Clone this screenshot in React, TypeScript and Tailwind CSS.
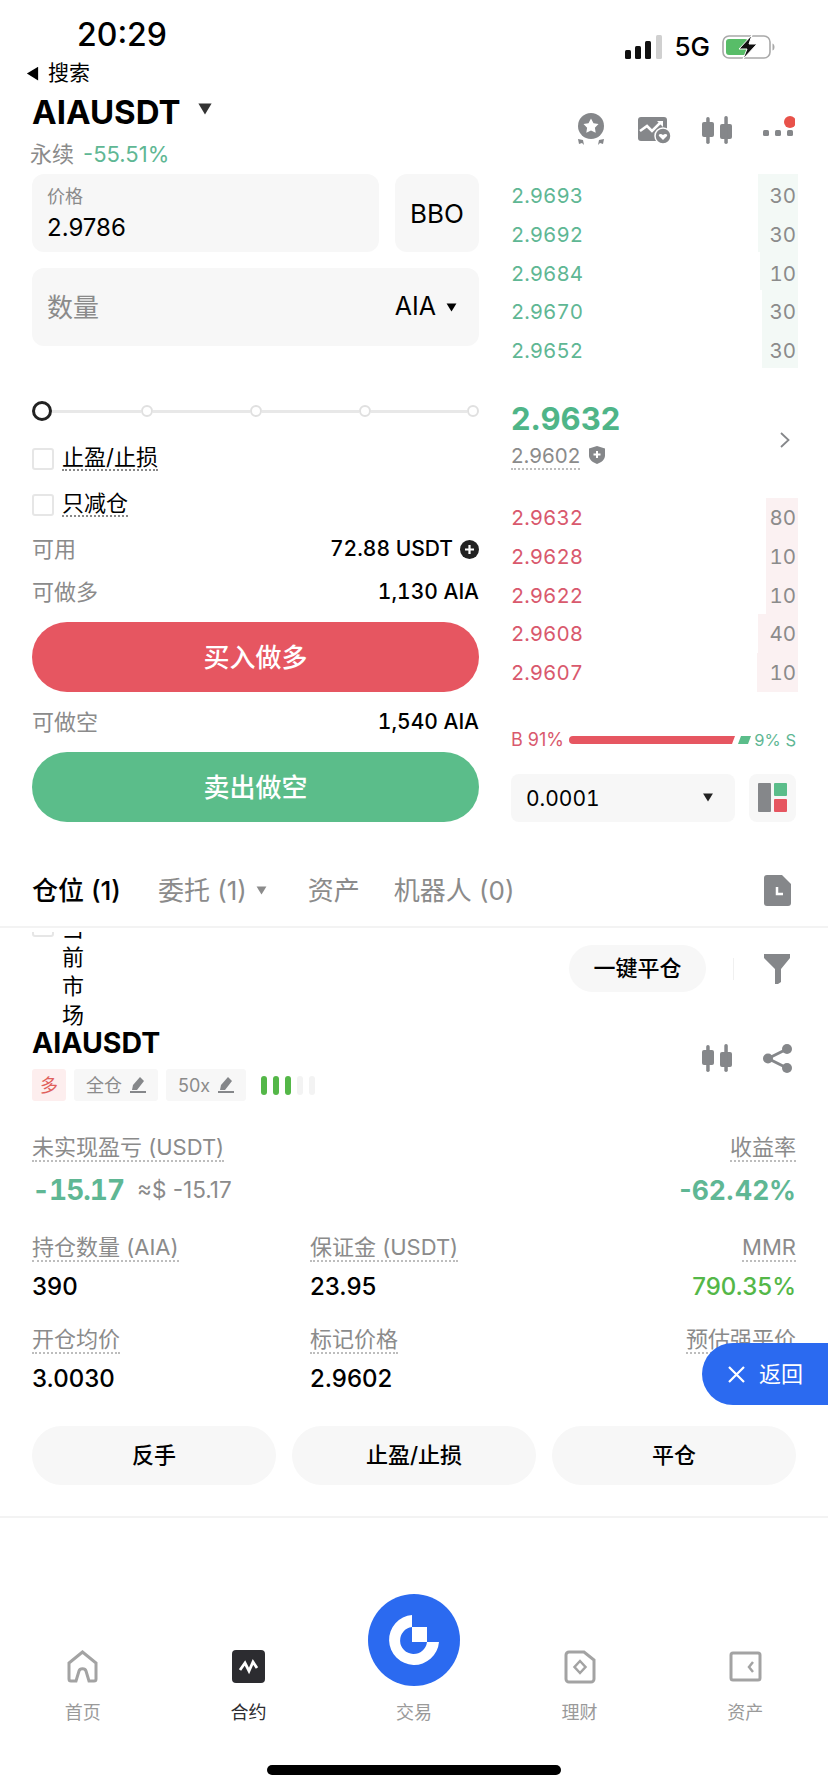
import React from 'react';

const asks = [
  { price: '2.9693', qty: '30', width: 'w-[40px]' },
  { price: '2.9692', qty: '30', width: 'w-[40px]' },
  { price: '2.9684', qty: '10', width: 'w-[38px]' },
  { price: '2.9670', qty: '30', width: 'w-[36px]' },
  { price: '2.9652', qty: '30', width: 'w-[36px]' },
];

const bids = [
  { price: '2.9632', qty: '80', width: 'w-[32px]' },
  { price: '2.9628', qty: '10', width: 'w-[32px]' },
  { price: '2.9622', qty: '10', width: 'w-[32px]' },
  { price: '2.9608', qty: '40', width: 'w-[40px]' },
  { price: '2.9607', qty: '10', width: 'w-[41px]' },
];

const Triangle = ({ className }: { className: string }) => (
  <svg className={className} viewBox="0 0 12 10" fill="currentColor">
    <path d="M0.5 0.5h11L6 9.5z" />
  </svg>
);

const Candles = ({ className }: { className: string }) => (
  <svg className={className} viewBox="0 0 30 29" fill="#85878a">
    <rect x="0" y="6" width="12" height="15" rx="2" />
    <rect x="4.200" y="1" width="3.500" height="27" rx="1.700" />
    <rect x="18" y="8" width="12" height="15" rx="2" />
    <rect x="22.300" y="0" width="3.500" height="28" rx="1.700" />
  </svg>
);

const DottedLabel = ({ children }: { children: React.ReactNode }) => (
  <span className="inline-block h-[28px] leading-[26px] text-[22px] text-[#8b8b8b] border-b-2 border-dotted border-[#bdbdbd] whitespace-nowrap">
    {children}
  </span>
);

const Stat = ({ label, value, right, green }: { label: string; value: string; right?: boolean; green?: boolean }) => (
  <div className={right ? 'flex flex-col items-end' : 'flex flex-col items-start'}>
    <DottedLabel>{label}</DottedLabel>
    <div className={green ? 'mt-[7px] h-[36px] leading-[36px] text-[24px] font-medium text-[#54b748]' : 'mt-[7px] h-[36px] leading-[36px] text-[24px] font-medium text-black'}>
      {value}
    </div>
  </div>
);

const InfoRow = ({ label, children }: { label: string; children: React.ReactNode }) => (
  <div className="h-[28px] flex items-center justify-between">
    <span className="text-[22px] text-[#8b8b8b]">{label}</span>
    <span className="flex items-center gap-[7px] text-[21px] font-medium tabular-nums text-black">{children}</span>
  </div>
);

const NavLabel = ({ children, active }: { children: string; active?: boolean }) => (
  <div className={active ? 'mt-[16px] h-[26px] leading-[26px] text-[18px] text-[#2c2c30]' : 'mt-[16px] h-[26px] leading-[26px] text-[18px] text-[#9a9a9a]'}>
    {children}
  </div>
);

export default function App() {
  return (
    <div
      className="w-[828px] h-[1792px] relative overflow-hidden bg-white text-black"
      style={{ fontFamily: 'Inter, "Noto Sans CJK SC", sans-serif' }}
    >
      {/* Status bar */}
      <div className="h-[61px] flex justify-between">
        <div className="ml-[77px] mt-[16px] h-[38px] leading-[38px] text-[32px] font-medium">20:29</div>
        <div className="mt-[35px] mr-[53px] h-[24px] flex items-center">
          <svg className="w-[37px] h-[24px]" viewBox="0 0 37 24" fill="#111">
            <rect x="0" y="15" width="6" height="9" rx="1.500" />
            <rect x="10" y="11" width="6" height="13" rx="1.500" />
            <rect x="20" y="6" width="6" height="18" rx="1.500" />
            <rect x="31" y="0" width="6" height="24" rx="1.500" fill="#d0d0d0" />
          </svg>
          <span className="ml-[12px] text-[26px] leading-[24px] font-medium">5G</span>
          <svg className="ml-[12px] w-[53px] h-[24px]" viewBox="0 0 53 24">
            <rect x="1" y="1" width="47" height="22" rx="6" fill="none" stroke="#a9a9a9" strokeWidth="1.600" />
            <rect x="4" y="4" width="22" height="16" rx="3" fill="#58bd68" />
            <path d="M50.500 8.500c1.500.5 2 2 2 3.500s-.5 3-2 3.500z" fill="#a9a9a9" />
            <path d="M30 0 L17 14 h8 L21 24 L35 9 h-8 z" fill="#111" stroke="#fff" strokeWidth="1" />
          </svg>
        </div>
      </div>

      {/* Header */}
      <div className="h-[113px] flex justify-between pl-[25px] pr-[33px]">
        <div>
          <div className="h-[24px] flex items-center">
            <Triangle className="w-[15px] h-[15px] rotate-90 text-black" />
            <span className="ml-[8px] text-[21px] leading-[24px]">搜索</span>
          </div>
          <div className="mt-[11px] ml-[7px] h-[32px] flex items-center">
            <span className="text-[33px] leading-[32px] font-bold">AIAUSDT</span>
            <Triangle className="ml-[17px] -mt-[6px] w-[16px] h-[12px] text-[#333]" />
          </div>
          <div className="mt-[12px] ml-[5px] h-[28px] flex items-center gap-[9px] text-[22px] leading-[28px]">
            <span className="text-[#8b8b8b]">永续</span>
            <span className="text-[#5fb794] text-[22px]">-55.51%</span>
          </div>
        </div>
        <div className="mt-[52px] h-[34px] flex items-center">
          <svg className="w-[36px] h-[34px]" viewBox="0 0 34 34">
            <circle cx="17" cy="13" r="13" fill="#85878a" />
            <path d="M17 5.500l2.500 4.700 5 .8-3.600 3.700.8 5.100-4.700-2.300-4.700 2.300.8-5.100-3.600-3.700 5-.8z" fill="#fff" />
            <path d="M4 26l5 1 1 5-2-2-3 1zM30 26l-5 1-1 5 2-2 3 1z" fill="#85878a" />
          </svg>
          <svg className="ml-[29px] w-[33px] h-[27px]" viewBox="0 0 33 27">
            <rect x="0" y="0" width="29" height="24" rx="3" fill="#85878a" />
            <path d="M2 14l7-5 5 5 9-9" fill="none" stroke="#fff" strokeWidth="2.500" />
            <path d="M19 4h6v6z" fill="#fff" />
            <circle cx="25" cy="19" r="8" fill="#85878a" stroke="#fff" strokeWidth="1.500" />
            <path d="M25 23l-4-4c-1-2 2-3 4-1 2-2 5-1 4 1z" fill="#fff" />
          </svg>
          <Candles className="ml-[31px] w-[30px] h-[29px]" />
          <svg className="ml-[31px] -mt-[5px] w-[32px] h-[24px]" viewBox="0 0 32 24" fill="#85878a">
            <rect x="0" y="14" width="6" height="6" rx="1.500" />
            <rect x="12" y="14" width="6" height="6" rx="1.500" />
            <rect x="24" y="14" width="6" height="6" rx="1.500" />
            <circle cx="27" cy="6" r="6" fill="#e8524a" />
          </svg>
        </div>
      </div>

      {/* Order form + order book */}
      <div className="h-[648px] flex pl-[32px] pr-[32px]">
        <div className="w-[447px]">
          <div className="flex gap-[16px]">
            <div className="w-[347px] h-[78px] rounded-[12px] bg-[#f7f7f7] pl-[15px] pt-[11px]">
              <div className="text-[18px] leading-[24px] text-[#8b8b8b]">价格</div>
              <div className="mt-[5px] text-[24px] leading-[28px]">2.9786</div>
            </div>
            <div className="w-[84px] h-[78px] rounded-[12px] bg-[#f7f7f7] flex items-center justify-center text-[26px]">BBO</div>
          </div>
          <div className="mt-[16px] h-[78px] rounded-[12px] bg-[#f7f7f7] pl-[15px] pr-[22px] flex items-center justify-between">
            <span className="text-[26px] text-[#8b8b8b]">数量</span>
            <span className="flex items-center gap-[10px] text-[25px]">
              AIA
              <Triangle className="w-[11px] h-[9px] text-black" />
            </span>
          </div>

          {/* Leverage slider */}
          <div className="mt-[55px] h-[20px] flex items-center">
            <div className="w-[20px] h-[20px] rounded-full border-[3px] border-[#222] shrink-0" />
            <div className="w-[89px] h-[3px] bg-[#e8e8e8]" />
            <div className="w-[12px] h-[12px] rounded-full border-2 border-[#e0e0e0] bg-white shrink-0" />
            <div className="w-[97px] h-[3px] bg-[#e8e8e8]" />
            <div className="w-[12px] h-[12px] rounded-full border-2 border-[#e0e0e0] bg-white shrink-0" />
            <div className="w-[98px] h-[3px] bg-[#e8e8e8]" />
            <div className="w-[12px] h-[12px] rounded-full border-2 border-[#e0e0e0] bg-white shrink-0" />
            <div className="w-[96px] h-[3px] bg-[#e8e8e8]" />
            <div className="w-[12px] h-[12px] rounded-full border-2 border-[#e0e0e0] bg-white shrink-0" />
          </div>

          <div className="mt-[25px] h-[25px] flex items-center">
            <div className="w-[22px] h-[22px] rounded-[3px] border-2 border-[#e6e6e6]" />
            <span className="ml-[8px] h-[25px] leading-[23px] text-[22px] border-b-2 border-dotted border-[#888]">止盈/止损</span>
          </div>
          <div className="mt-[21px] h-[25px] flex items-center">
            <div className="w-[22px] h-[22px] rounded-[3px] border-2 border-[#e6e6e6]" />
            <span className="ml-[8px] h-[25px] leading-[23px] text-[22px] border-b-2 border-dotted border-[#888]">只减仓</span>
          </div>

          <div className="mt-[18px]">
            <InfoRow label="可用">
              72.88 USDT
              <svg className="w-[19px] h-[19px]" viewBox="0 0 19 19">
                <circle cx="9.500" cy="9.500" r="9.500" fill="#222" />
                <path d="M9.500 5v9M5 9.500h9" stroke="#fff" strokeWidth="2.200" />
              </svg>
            </InfoRow>
          </div>
          <div className="mt-[15px]">
            <InfoRow label="可做多">1,130 AIA</InfoRow>
          </div>
          <button className="mt-[16px] w-full h-[70px] rounded-full bg-[#e65661] text-white text-[26px] font-medium">买入做多</button>
          <div className="mt-[16px]">
            <InfoRow label="可做空">1,540 AIA</InfoRow>
          </div>
          <button className="mt-[16px] w-full h-[70px] rounded-full bg-[#5bbd8a] text-white text-[26px] font-medium">卖出做空</button>
        </div>

        <div className="ml-[32px] w-[285px]">
          {asks.map((row) => (
            <div key={row.price} className="h-[38.8px] flex justify-between tabular-nums">
              <span className="pt-[3px] leading-[38px] text-[20.5px] text-[#5fb794]">{row.price}</span>
              <span className={`${row.width} -mr-[2px] pr-[2px] pt-[3px] text-right leading-[38px] text-[20.5px] text-[#8b8b8b] bg-[#f3f9f6]`}>{row.qty}</span>
            </div>
          ))}

          <div className="h-[130px] flex items-center justify-between">
            <div className="mt-[4px]">
              <div className="h-[40px] leading-[40px] text-[31px] font-bold text-[#4fb588]">2.9632</div>
              <div className="mt-[4px] flex items-start gap-[9px]">
                <span className="h-[27px] leading-[26px] text-[20.5px] text-[#8b8b8b] border-b-2 border-dotted border-[#bdbdbd]">2.9602</span>
                <svg className="mt-[3px] w-[16px] h-[18px]" viewBox="0 0 16 18">
                  <path d="M8 0l8 2.500v7c0 4-3.500 7-8 8.500-4.500-1.500-8-4.500-8-8.500v-7z" fill="#85878a" />
                  <path d="M8 5v7M4.500 8.500h7" stroke="#fff" strokeWidth="2" />
                </svg>
              </div>
            </div>
            <svg className="mr-[6px] mt-[15px] w-[10px] h-[16px]" viewBox="0 0 10 16" fill="none" stroke="#85878a" strokeWidth="1.800">
              <path d="M1 1l7.500 7L1 15" />
            </svg>
          </div>

          {bids.map((row) => (
            <div key={row.price} className="h-[38.8px] flex justify-between tabular-nums">
              <span className="pt-[1px] leading-[38px] text-[20.5px] text-[#d9596d]">{row.price}</span>
              <span className={`${row.width} -mr-[2px] pr-[2px] pt-[1px] text-right leading-[38px] text-[20.5px] text-[#8b8b8b] bg-[#fbf1f2]`}>{row.qty}</span>
            </div>
          ))}

          {/* Buy / sell ratio */}
          <div className="mt-[38px] h-[20px] flex items-center leading-[20px]">
            <span className="w-[58px] text-[18px] text-[#d9596d] whitespace-nowrap">B 91%</span>
            <svg className="w-[182px] h-[8px]" viewBox="0 0 182 8">
              <path d="M4 0h162l-3 8H4a4 4 0 0 1 0-8z" fill="#e65661" />
              <path d="M172 0h10l-3 8h-10z" fill="#5bbd8a" />
            </svg>
            <span className="ml-auto text-[16.5px] text-[#5fb794] whitespace-nowrap">9% S</span>
          </div>

          <div className="mt-[24px] flex justify-between">
            <div className="w-[224px] h-[48px] rounded-[8px] bg-[#f7f7f7] pl-[15px] pr-[21px] flex items-center justify-between">
              <span className="mt-[2px] text-[21px] tabular-nums">0.0001</span>
              <Triangle className="w-[12px] h-[9px] text-[#222]" />
            </div>
            <div className="w-[47px] h-[48px] rounded-[8px] bg-[#f7f7f7] flex items-center justify-center">
              <svg className="w-[29px] h-[29px]" viewBox="0 0 29 29">
                <rect x="0" y="0" width="13" height="29" rx="1" fill="#85878a" />
                <rect x="16" y="0" width="13" height="13" rx="1" fill="#5bbd8a" />
                <rect x="16" y="16" width="13" height="13" rx="1" fill="#e65661" />
              </svg>
            </div>
          </div>
        </div>
      </div>

      {/* Tabs */}
      <div className="h-[106px] pt-[32px] pl-[32px] pr-[37px] flex items-center border-b-2 border-[#f3f3f3] text-[26px] text-[#8b8b8b]">
        <span className="font-medium text-black">仓位 (1)</span>
        <span className="ml-[37px]">委托 (1)</span>
        <Triangle className="ml-[9px] w-[11px] h-[9px] text-[#8b8b8b]" />
        <span className="ml-[41px]">资产</span>
        <span className="ml-[34px]">机器人 (0)</span>
        <svg className="ml-auto w-[27px] h-[31px]" viewBox="0 0 27 31">
          <path d="M3 0h15l9 9v19a3 3 0 0 1-3 3H3a3 3 0 0 1-3-3V3a3 3 0 0 1 3-3z" fill="#85878a" />
          <path d="M13 12v7h6" fill="none" stroke="#fff" strokeWidth="2.500" />
        </svg>
      </div>

      {/* Position */}
      <div className="h-[590px] pt-[4px] border-b-2 border-[#f3f3f3] px-[32px]">
        <div className="h-[94px] flex items-start overflow-hidden">
          <div className="-mt-[17px] w-[22px] h-[22px] rounded-[3px] border-2 border-[#e6e6e6]" />
          <div className="ml-[8px] -mt-[18px] w-[22px] text-[22px] leading-[29px]">当前市场</div>
          <button className="ml-auto mt-[13px] w-[137px] h-[47px] rounded-full bg-[#f7f7f7] text-[22px] font-medium">一键平仓</button>
          <div className="ml-[27px] mt-[26px] w-[1px] h-[22px] bg-[#f0f0f0]" />
          <svg className="ml-[30px] mt-[22px] mr-[6px] w-[26px] h-[30px]" viewBox="0 0 26 30" fill="#85878a">
            <path d="M0 0h26v4l-9 11v13l-3 2h-3V15L0 4z" />
          </svg>
        </div>

        <div className="flex justify-between">
          <div>
            <div className="h-[34px] leading-[34px] text-[28.5px] font-bold">AIAUSDT</div>
            <div className="mt-[9px] h-[32px] flex items-center gap-[8px] text-[18px] text-[#8b8b8b]">
              <span className="w-[34px] h-[32px] rounded-[3px] bg-[#fdeeee] text-[#e0605c] flex items-center justify-center">多</span>
              <span className="w-[84px] h-[32px] rounded-[3px] bg-[#f7f7f7] flex items-center justify-center gap-[8px]">
                全仓
                <svg className="w-[16px] h-[16px]" viewBox="0 0 16 16" fill="#85878a">
                  <path d="M10 0l4 4-7 9H2l1-5zM0 14h16v2H0z" />
                </svg>
              </span>
              <span className="w-[80px] h-[32px] rounded-[3px] bg-[#f7f7f7] flex items-center justify-center gap-[8px]">
                50x
                <svg className="w-[16px] h-[16px]" viewBox="0 0 16 16" fill="#85878a">
                  <path d="M10 0l4 4-7 9H2l1-5zM0 14h16v2H0z" />
                </svg>
              </span>
              <span className="ml-[7px] flex gap-[6px]">
                <span className="w-[6px] h-[19px] rounded-full bg-[#54b748]" />
                <span className="w-[6px] h-[19px] rounded-full bg-[#54b748]" />
                <span className="w-[6px] h-[19px] rounded-full bg-[#54b748]" />
                <span className="w-[6px] h-[19px] rounded-full bg-[#f3f3f3]" />
                <span className="w-[6px] h-[19px] rounded-full bg-[#f3f3f3]" />
              </span>
            </div>
          </div>
          <div className="pt-[18px] flex items-start">
            <Candles className="w-[30px] h-[29px]" />
            <svg className="ml-[31px] mr-[4px] w-[29px] h-[29px]" viewBox="0 0 29 29" fill="#85878a">
              <circle cx="24" cy="5" r="5" />
              <circle cx="5" cy="14.500" r="5" />
              <circle cx="24" cy="24" r="5" />
              <path d="M5 14.500L24 5M5 14.500L24 24" stroke="#85878a" strokeWidth="3" />
            </svg>
          </div>
        </div>

        <div className="mt-[33px] flex justify-between">
          <div>
            <DottedLabel>未实现盈亏 (USDT)</DottedLabel>
            <div className="mt-[8px] h-[40px] flex items-center">
              <span className="text-[28px] font-bold tabular-nums tracking-[-1px] text-[#5fb794]">-15.17</span>
              <span className="ml-[13px] text-[22.5px] text-[#8b8b8b]">≈$ -15.17</span>
            </div>
          </div>
          <div className="flex flex-col items-end">
            <DottedLabel>收益率</DottedLabel>
            <div className="mt-[8px] h-[40px] leading-[40px] text-[26.5px] font-bold text-[#5fb794]">-62.42%</div>
          </div>
        </div>

        <div className="mt-[24px] grid grid-cols-[278px_1fr_auto] gap-y-[21px]">
          <Stat label="持仓数量 (AIA)" value="390" />
          <Stat label="保证金 (USDT)" value="23.95" />
          <Stat label="MMR" value="790.35%" right green />
          <Stat label="开仓均价" value="3.0030" />
          <Stat label="标记价格" value="2.9602" />
          <Stat label="预估强平价" value="" right />
        </div>

        <div className="mt-[29px] grid grid-cols-3 gap-[16px]">
          <button className="h-[59px] rounded-full bg-[#f7f7f7] text-[22px] font-medium">反手</button>
          <button className="h-[59px] rounded-full bg-[#f7f7f7] text-[22px] font-medium">止盈/止损</button>
          <button className="h-[59px] rounded-full bg-[#f7f7f7] text-[22px] font-medium">平仓</button>
        </div>
      </div>

      {/* Floating back button */}
      <div className="absolute right-0 top-[1343px] w-[126px] h-[62px] rounded-l-[31px] bg-[#2b6af0] text-white text-[22px] flex items-center pl-[26px] gap-[14px]">
        <svg className="w-[17px] h-[17px]" viewBox="0 0 17 17" fill="none" stroke="#fff" strokeWidth="2.200">
          <path d="M1 1l15 15M16 1L1 16" />
        </svg>
        返回
      </div>

      {/* Bottom nav */}
      <div className="grid grid-cols-5 pt-[132px]">
        <div className="flex flex-col items-center">
          <svg className="w-[31px] h-[34px]" viewBox="0 0 31 34" fill="none" stroke="#a3a3a3" strokeWidth="3">
            <path d="M15.500 2L2 13v16a2 2 0 0 0 2 2h5l3-10c1-3 6-3 7 0l3 10h5a2 2 0 0 0 2-2V13z" />
          </svg>
          <NavLabel>首页</NavLabel>
        </div>
        <div className="flex flex-col items-center">
          <svg className="w-[33px] h-[34px]" viewBox="0 0 33 34">
            <rect x="0" y="0" width="33" height="33" rx="4" fill="#2c2c30" />
            <path d="M8 20l5-7 4 8 4-9 4 6" fill="none" stroke="#fff" strokeWidth="2.800" />
          </svg>
          <NavLabel active>合约</NavLabel>
        </div>
        <div className="flex flex-col items-center">
          <div className="h-[34px] flex flex-col justify-end">
            <div className="w-[92px] h-[92px] shrink-0 -mb-[2px] rounded-full bg-[#2b6af0] flex items-center justify-center">
              <svg className="w-[52px] h-[52px]" viewBox="0 0 52 52">
                <path d="M24 1a25 25 0 1 0 27 27H39a13.500 13.500 0 1 1-15-15z" fill="#fff" />
                <rect x="24" y="13" width="15" height="15" fill="#fff" />
              </svg>
            </div>
          </div>
          <NavLabel>交易</NavLabel>
        </div>
        <div className="flex flex-col items-center">
          <svg className="w-[32px] h-[34px]" viewBox="0 0 32 34" fill="none" stroke="#a3a3a3" strokeWidth="3">
            <path d="M5 2h15l10 8v19a3 3 0 0 1-3 3H5a3 3 0 0 1-3-3V5a3 3 0 0 1 3-3z" />
            <path d="M16 11l5.500 6-5.500 6-5.500-6z" strokeWidth="2.500" />
          </svg>
          <NavLabel>理财</NavLabel>
        </div>
        <div className="flex flex-col items-center">
          <svg className="w-[33px] h-[34px]" viewBox="0 0 33 34" fill="none" stroke="#a3a3a3" strokeWidth="3">
            <rect x="2" y="3" width="29" height="27" rx="2" />
            <path d="M24 12l-4 5 4 5" strokeWidth="2.500" />
          </svg>
          <NavLabel>资产</NavLabel>
        </div>
      </div>

      {/* Home indicator */}
      <div className="mt-[39px] mx-auto w-[294px] h-[10px] rounded-full bg-black" />
    </div>
  );
}
